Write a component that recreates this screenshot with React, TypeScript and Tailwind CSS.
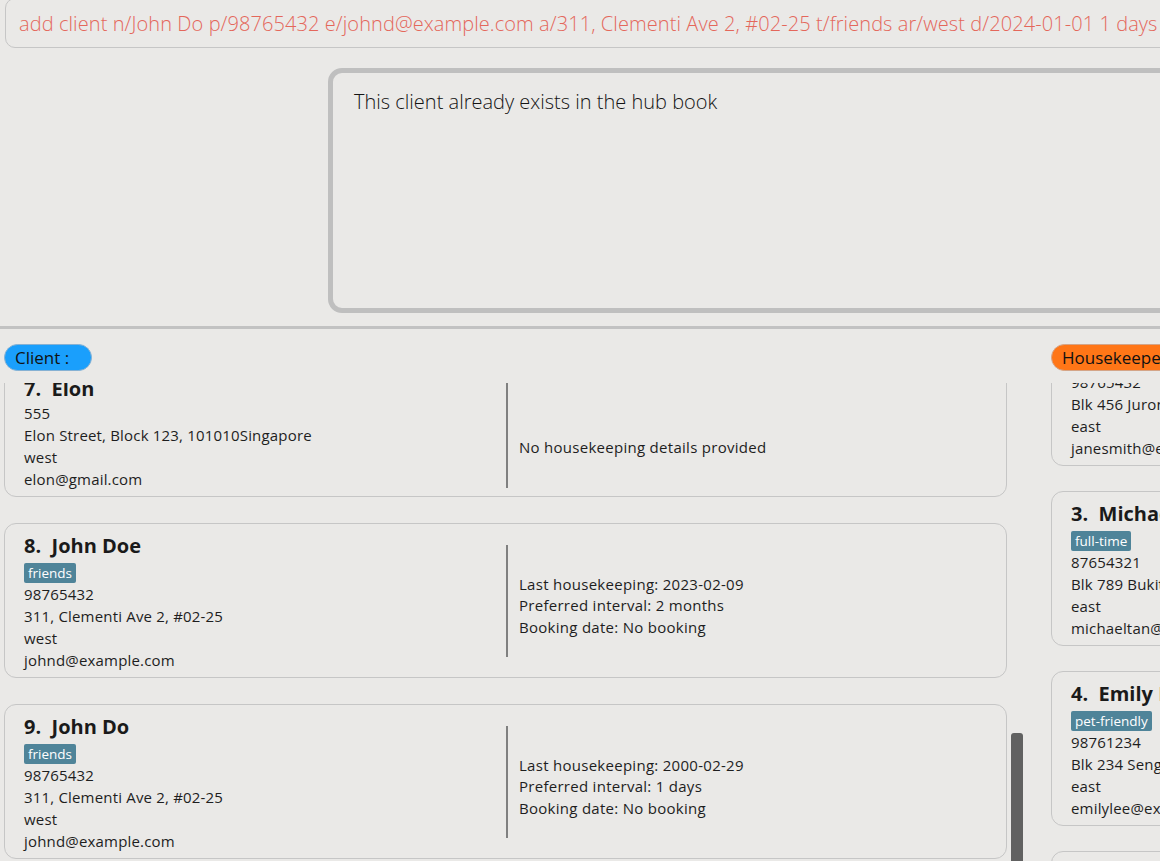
import React from 'react';

type Person = {
  index: number;
  name: string;
  tag?: string;
  phone: string;
  address: string;
  area: string;
  email: string;
  details: string[];
};

const CLIENTS: Person[] = [
  {
    index: 7,
    name: 'Elon',
    phone: '555',
    address: 'Elon Street, Block 123, 101010Singapore',
    area: 'west',
    email: 'elon@gmail.com',
    details: ['\u00a0', 'No housekeeping details provided'],
  },
  {
    index: 8,
    name: 'John Doe',
    tag: 'friends',
    phone: '98765432',
    address: '311, Clementi Ave 2, #02-25',
    area: 'west',
    email: 'johnd@example.com',
    details: ['Last housekeeping: 2023-02-09', 'Preferred interval: 2 months', 'Booking date: No booking'],
  },
  {
    index: 9,
    name: 'John Do',
    tag: 'friends',
    phone: '98765432',
    address: '311, Clementi Ave 2, #02-25',
    area: 'west',
    email: 'johnd@example.com',
    details: ['Last housekeeping: 2000-02-29', 'Preferred interval: 1 days', 'Booking date: No booking'],
  },
];

const HOUSEKEEPERS: Person[] = [
  {
    index: 2,
    name: 'Jane Smith',
    tag: 'part-time',
    phone: '98765432',
    address: 'Blk 456 Jurong West St 41',
    area: 'east',
    email: 'janesmith@example.com',
    details: [],
  },
  {
    index: 3,
    name: 'Michael Tan',
    tag: 'full-time',
    phone: '87654321',
    address: 'Blk 789 Bukit Timah Road',
    area: 'east',
    email: 'michaeltan@example.com',
    details: [],
  },
  {
    index: 4,
    name: 'Emily Lee',
    tag: 'pet-friendly',
    phone: '98761234',
    address: 'Blk 234 Sengkang East Way',
    area: 'east',
    email: 'emilylee@example.com',
    details: [],
  },
  {
    index: 5,
    name: 'David Lim',
    tag: 'weekends',
    phone: '91234567',
    address: 'Blk 101 Tampines Ave 5',
    area: 'east',
    email: 'davidlim@example.com',
    details: [],
  },
];

function PersonCard({ person }: { person: Person }) {
  return (
    <div className="flex w-[1003px] shrink-0 rounded-[12px] border border-[#c6c6c6]">
      <div className="w-[501px] shrink-0 pl-[19px] pt-[9px] pb-[6px] text-[15px] leading-[22px] tracking-[0.18px] text-[#1e1e1e]">
        <div className="whitespace-pre text-[20px] font-bold leading-[26px] tracking-normal text-[#1a1a1a]">
          {person.index}.  {person.name}
        </div>
        {person.tag && (
          <div className="mt-[4px] flex">
            <span className="rounded-[2px] bg-[#4f8499] px-[4px] text-[13.5px] leading-[20px] tracking-normal text-white">
              {person.tag}
            </span>
          </div>
        )}
        <div>{person.phone}</div>
        <div>{person.address}</div>
        <div>{person.area}</div>
        <div>{person.email}</div>
      </div>
      <div className="h-[112px] w-[2px] shrink-0 self-center bg-[#808080]" />
      <div className="flex flex-col justify-center pl-[11px] pt-[11px] text-[15px] leading-[21.5px] tracking-[0.28px] text-[#1e1e1e]">
        {person.details.map((d, i) => (
          <div key={i}>{d}</div>
        ))}
      </div>
    </div>
  );
}

export default function App() {
  return (
    <div className="h-[861px] w-[1160px] overflow-hidden bg-[#eae9e7] font-['Open_Sans','Noto_Sans',sans-serif]">
      <div className="-mt-[2px] ml-[5px] flex h-[50px] w-[1240px] items-center whitespace-nowrap rounded-[10px] border border-[#c6c6c6] pl-[13px] pt-[2px] text-[20px] font-light tracking-[0.08px] text-[#e4675b]">
        add client n/John Do p/98765432 e/johnd@example.com a/311, Clementi Ave 2, #02-25 t/friends ar/west d/2024-01-01 1 days
      </div>

      <div className="ml-[328px] mt-[20px] h-[245px] w-[900px] rounded-[14px] border-[5px] border-[#bfbfbf] px-[21px] pt-[15px] text-[20px] font-light leading-[27px] text-[#141414]">
        This client already exists in the hub book
      </div>

      <div className="mt-[13px] h-[3px] bg-[#c2c2c2]" />

      <div className="flex">
        <div className="w-[1051px] shrink-0 pl-[4px]">
          <div className="mt-[15px] flex h-[27px] w-[88px] items-center rounded-full border border-[#86b1d3] bg-[#1a9ffc] pl-[10px] text-[17px] text-[#111]">
            Client :
          </div>
          <div className="mt-[12px] flex h-[479px] overflow-hidden">
            <div className="-mt-[17px] flex flex-col gap-[26px]">
              {CLIENTS.map((c) => (
                <PersonCard key={c.index} person={c} />
              ))}
            </div>
            <div className="ml-[4px] w-[12px] shrink-0 pt-[350px]">
              <div className="h-[200px] rounded-[3px] bg-[#616161]" />
            </div>
          </div>
        </div>

        <div className="shrink-0">
          <div className="mt-[15px] flex h-[27px] w-[130px] items-center rounded-full border border-[#d4a588] bg-[#ff7617] pl-[10px] text-[17px] text-[#111]">
            Housekeeper :
          </div>
          <div className="mt-[12px] h-[479px] overflow-hidden">
            <div className="-mt-[72px] flex flex-col gap-[25px]">
              {HOUSEKEEPERS.map((h) => (
                <PersonCard key={h.index} person={h} />
              ))}
            </div>
          </div>
        </div>
      </div>
    </div>
  );
}
